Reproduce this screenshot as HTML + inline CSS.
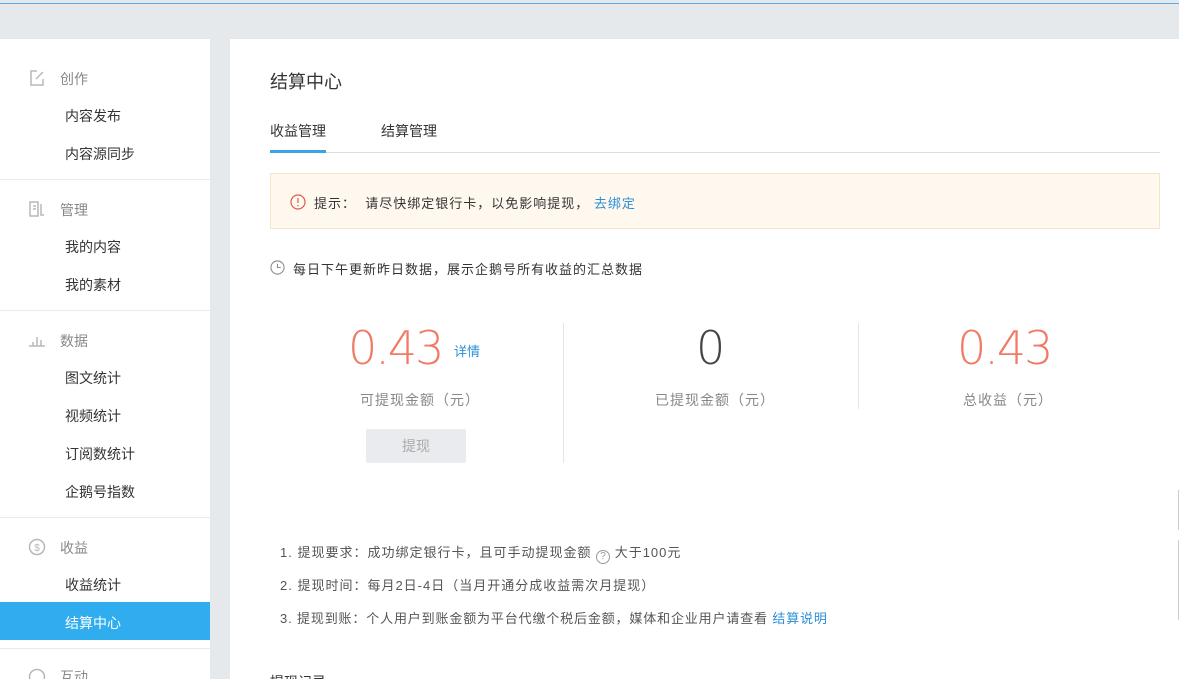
<!DOCTYPE html>
<html><head><meta charset="utf-8"><style>
*{margin:0;padding:0;box-sizing:border-box}
html,body{width:1179px;height:679px;overflow:hidden}
body{background:#e6e9ec;font-family:"Liberation Sans","Noto Sans CJK SC",sans-serif;position:relative;color:#333}
.abs{position:absolute}
.topline{left:0;top:3px;width:1179px;height:1px;background:#5aaee6}
.side{left:0;top:39px;width:210px;height:640px;background:#fff}
.main{left:230px;top:39px;width:949px;height:640px;background:#fff}
.grp{position:absolute;left:60px;font-size:14px;color:#888}
.it{position:absolute;left:65px;font-size:14px;color:#333}
.sep{position:absolute;left:0;width:210px;height:1px;background:#eaeaea}
.ic{position:absolute;left:28px}
.t{position:absolute;white-space:nowrap}
.num{position:absolute;white-space:nowrap;font-family:"DejaVu Sans ExtraLight","DejaVu Sans","Liberation Sans",sans-serif;font-weight:200;font-size:46px;letter-spacing:-2px;line-height:56px}
.ls{letter-spacing:1px}
</style></head><body>
<div class="abs topline"></div>
<div class="abs side"></div>
<div class="abs main"></div>

<svg class="ic" style="top:69px" width="18" height="18" viewBox="0 0 18 18" fill="none" stroke="#b5b8bc" stroke-width="1.5"><path d="M9 2H3v14h12v-6"/><path d="M8 10l7-7"/></svg>
<div class="grp" style="top:69px">创作</div>
<div class="it" style="top:106px">内容发布</div>
<div class="it" style="top:144px">内容源同步</div>
<div class="sep" style="top:179px"></div>

<svg class="ic" style="top:200px" width="18" height="18" viewBox="0 0 18 18" fill="none" stroke="#b5b8bc" stroke-width="1.5"><path d="M2 2h8v14H2z"/><path d="M5 6h3M5 9h3"/><path d="M13 4v11h3"/></svg>
<div class="grp" style="top:200px">管理</div>
<div class="it" style="top:237px">我的内容</div>
<div class="it" style="top:275px">我的素材</div>
<div class="sep" style="top:310px"></div>

<svg class="ic" style="top:331px" width="18" height="18" viewBox="0 0 18 18" fill="none" stroke="#b5b8bc" stroke-width="1.5"><path d="M1 15h16M5 15v-4M9 15V6M13 15v-6"/></svg>
<div class="grp" style="top:331px">数据</div>
<div class="it" style="top:368px">图文统计</div>
<div class="it" style="top:406px">视频统计</div>
<div class="it" style="top:444px">订阅数统计</div>
<div class="it" style="top:482px">企鹅号指数</div>
<div class="sep" style="top:517px"></div>

<svg class="ic" style="top:538px" width="18" height="18" viewBox="0 0 18 18" fill="none" stroke="#b5b8bc" stroke-width="1.5"><circle cx="9" cy="9" r="7.5"/><text x="9" y="13" font-size="10" text-anchor="middle" fill="#b5b8bc" stroke="none">$</text></svg>
<div class="grp" style="top:538px">收益</div>
<div class="it" style="top:575px">收益统计</div>
<div class="abs" style="left:0;top:602px;width:210px;height:38px;background:#2fadee"></div>
<div class="it" style="top:613px;color:#fff">结算中心</div>
<div class="sep" style="top:648px"></div>
<svg class="ic" style="top:668px" width="18" height="18" viewBox="0 0 18 18" fill="none" stroke="#b5b8bc" stroke-width="1.5"><circle cx="9" cy="9" r="7.5"/></svg>
<div class="grp" style="top:667px">互动</div>

<div class="t" style="left:270px;top:68px;font-size:18px;color:#333">结算中心</div>
<div class="t" style="left:270px;top:121px;font-size:14px;color:#333">收益管理</div>
<div class="t" style="left:381px;top:121px;font-size:14px;color:#333">结算管理</div>
<div class="abs" style="left:270px;top:152px;width:890px;height:1px;background:#ddd"></div>
<div class="abs" style="left:270px;top:150px;width:56px;height:3px;background:#3aa4e6"></div>

<div class="abs" style="left:270px;top:173px;width:890px;height:56px;background:#fff8ee;border:1px solid #f5e6c8"></div>
<svg class="abs" style="left:290px;top:194px" width="16" height="16" viewBox="0 0 16 16" fill="none" stroke="#e05a4f" stroke-width="1.2"><circle cx="8" cy="8" r="7"/><path d="M8 4v5M8 11v1.2"/></svg>
<div class="t ls" style="left:314px;top:193px;font-size:13px;color:#333">提示：&nbsp;&nbsp;请尽快绑定银行卡，以免影响提现，<span style="color:#2a8fd8">&nbsp;去绑定</span></div>

<svg class="abs" style="left:270px;top:260px" width="15" height="15" viewBox="0 0 16 16" fill="none" stroke="#888" stroke-width="1.1"><circle cx="8" cy="8" r="7"/><path d="M8 4v4h3.5"/></svg>
<div class="t ls" style="left:293px;top:259px;font-size:13px;color:#333">每日下午更新昨日数据，展示企鹅号所有收益的汇总数据</div>

<div class="num" style="left:348px;top:320px;color:#f07a66">0.43</div>
<div class="t" style="left:454px;top:341px;font-size:13px;color:#2a8fd8">详情</div>
<div class="t ls" style="left:360px;top:390px;font-size:14px;color:#888">可提现金额（元）</div>
<div class="abs" style="left:366px;top:429px;width:100px;height:34px;background:#e9ebee;border-radius:2px;color:#aaa;font-size:14px;text-align:center;line-height:34px">提现</div>
<div class="abs" style="left:563px;top:323px;width:1px;height:140px;background:#e5e5e5"></div>
<div class="num" style="left:696px;top:320px;color:#444">0</div>
<div class="t ls" style="left:655px;top:390px;font-size:14px;color:#888">已提现金额（元）</div>
<div class="abs" style="left:858px;top:323px;width:1px;height:86px;background:#e5e5e5"></div>
<div class="num" style="left:957px;top:320px;color:#f07a66">0.43</div>
<div class="t ls" style="left:963px;top:390px;font-size:14px;color:#888">总收益（元）</div>

<div class="t ls" style="left:280px;top:542px;font-size:13px;color:#555">1. 提现要求：成功绑定银行卡，且可手动提现金额 <span style="display:inline-block;width:14px;height:14px;border:1px solid #999;border-radius:50%;font-size:10px;line-height:12px;text-align:center;color:#999;vertical-align:-2px;letter-spacing:0">?</span> 大于100元</div>
<div class="t ls" style="left:280px;top:575px;font-size:13px;color:#555">2. 提现时间：每月2日-4日（当月开通分成收益需次月提现）</div>
<div class="t" style="left:280px;top:608px;font-size:13px;color:#555;letter-spacing:0.85px">3. 提现到账：个人用户到账金额为平台代缴个税后金额，媒体和企业用户请查看 <span style="color:#2a8fd8">结算说明</span></div>
<div class="t" style="left:270px;top:672px;font-size:14px;color:#333">提现记录</div>
<div class="abs" style="left:1178px;top:490px;width:1px;height:40px;background:#ccc"></div>
<div class="abs" style="left:1178px;top:540px;width:1px;height:80px;background:#ccc"></div>
</body></html>
